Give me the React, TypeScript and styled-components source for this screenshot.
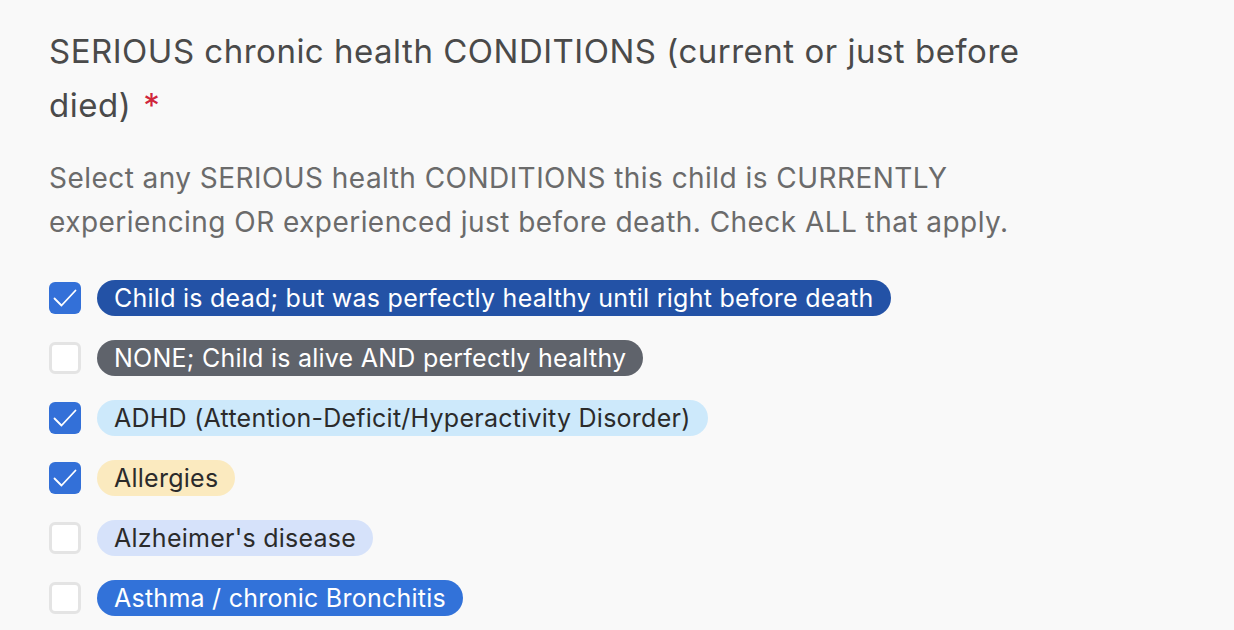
import React from "react";
import styled, { createGlobalStyle } from "styled-components";

const Global = createGlobalStyle`
  html, body { margin: 0; padding: 0; background: #f9f9f9; }
  body { font-family: Inter, "Noto Sans", sans-serif; }
`;

const Page = styled.div`
  padding: 24px 49px;
  width: 1060px;
`;

const Title = styled.h2`
  margin: 0;
  font-size: 33px;
  font-weight: 400;
  line-height: 54px;
  letter-spacing: 0.5px;
  color: #4a4a4a;
  width: 1040px;
`;

const Star = styled.span`
  display: inline-block;
  color: #d0263b;
  margin-left: 12px;
`;

const Desc = styled.p`
  margin: 24px 0 0;
  font-size: 28px;
  line-height: 44px;
  letter-spacing: 0.45px;
  color: #6b6b6b;
  width: 1000px;
`;

const List = styled.div`
  margin-top: 36px;
  display: flex;
  flex-direction: column;
  gap: 24px;
`;

const Row = styled.label`
  display: flex;
  align-items: center;
  gap: 16px;
`;

const Box = styled.span<{ $checked: boolean }>`
  width: 32px;
  height: 32px;
  box-sizing: border-box;
  border-radius: 6px;
  flex: none;
  display: flex;
  align-items: center;
  justify-content: center;
  background: ${(p) => (p.$checked ? "#3370d8" : "#ffffff")};
  border: ${(p) => (p.$checked ? "none" : "3px solid #e4e4e4")};
`;

const Pill = styled.span<{ $bg: string; $fg: string }>`
  display: inline-block;
  height: 36px;
  line-height: 36px;
  padding: 0 17px;
  border-radius: 18px;
  font-size: 25px;
  letter-spacing: 0.25px;
  background: ${(p) => p.$bg};
  color: ${(p) => p.$fg};
  white-space: nowrap;
`;

const Check = () => (
  <svg width="24" height="24" viewBox="0 0 24 24" fill="none">
    <path d="M1.5 12.5 L8.5 19.5 L22.5 4.5" stroke="#fff" strokeWidth="1.8" strokeLinecap="round" strokeLinejoin="round" />
  </svg>
);

const items = [
  { label: "Child is dead; but was perfectly healthy until right before death", checked: true, bg: "#2352a6", fg: "#ffffff" },
  { label: "NONE; Child is alive AND perfectly healthy", checked: false, bg: "#5f636b", fg: "#ffffff" },
  { label: "ADHD (Attention-Deficit/Hyperactivity Disorder)", checked: true, bg: "#cde9fb", fg: "#2b2b2b" },
  { label: "Allergies", checked: true, bg: "#fbeabf", fg: "#2b2b2b" },
  { label: "Alzheimer's disease", checked: false, bg: "#d6e2fa", fg: "#2b2b2b" },
  { label: "Asthma / chronic Bronchitis", checked: false, bg: "#3272d9", fg: "#ffffff" },
];

export default function App() {
  return (
    <>
      <Global />
      <Page>
        <Title>
          SERIOUS chronic health CONDITIONS (current or just before died)
          <Star>*</Star>
        </Title>
        <Desc>
          Select any SERIOUS health CONDITIONS this child is CURRENTLY experiencing OR experienced just before death. Check ALL that apply.
        </Desc>
        <List>
          {items.map((it) => (
            <Row key={it.label}>
              <Box $checked={it.checked}>{it.checked && <Check />}</Box>
              <Pill $bg={it.bg} $fg={it.fg}>{it.label}</Pill>
            </Row>
          ))}
        </List>
      </Page>
    </>
  );
}
